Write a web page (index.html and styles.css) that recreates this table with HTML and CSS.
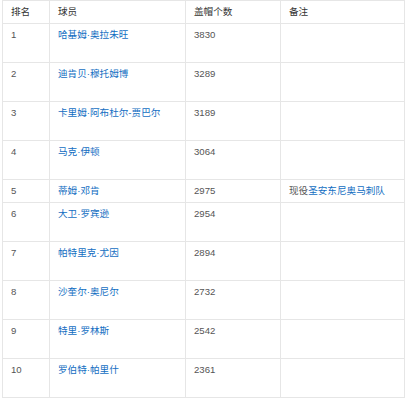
FILE: index.html
```html
<!DOCTYPE html>
<html>
<head>
<meta charset="utf-8">
<link rel="stylesheet" href="styles.css">
</head>
<body>
<table class="tbl">
  <colgroup>
    <col class="c1"><col class="c2"><col class="c3"><col class="c4">
  </colgroup>
  <tr class="head"><th>排名</th><th>球员</th><th>盖帽个数</th><th>备注</th></tr>
  <tr class="tall"><td>1</td><td><a>哈基姆·奥拉朱旺</a></td><td>3830</td><td></td></tr>
  <tr class="tall"><td>2</td><td><a>迪肯贝·穆托姆博</a></td><td>3289</td><td></td></tr>
  <tr class="tall"><td>3</td><td><a>卡里姆·阿布杜尔-贾巴尔</a></td><td>3189</td><td></td></tr>
  <tr class="tall"><td>4</td><td><a>马克·伊顿</a></td><td>3064</td><td></td></tr>
  <tr><td>5</td><td><a>蒂姆·邓肯</a></td><td>2975</td><td>现役<a>圣安东尼奥马刺队</a></td></tr>
  <tr class="tall"><td>6</td><td><a>大卫·罗宾逊</a></td><td>2954</td><td></td></tr>
  <tr class="tall"><td>7</td><td><a>帕特里克·尤因</a></td><td>2894</td><td></td></tr>
  <tr class="tall"><td>8</td><td><a>沙奎尔·奥尼尔</a></td><td>2732</td><td></td></tr>
  <tr class="tall"><td>9</td><td><a>特里·罗林斯</a></td><td>2542</td><td></td></tr>
  <tr class="tall"><td>10</td><td><a>罗伯特·帕里什</a></td><td>2361</td><td></td></tr>
</table>
</body>
</html>
```
FILE: styles.css
```css
html, body {
  margin: 0;
  padding: 0;
  background: #fff;
}
body {
  padding-left: 2px;
  font-family: "Liberation Sans", Arial, "Noto Sans CJK SC", sans-serif;
  font-size: 9.6px;
  color: #555;
}
.tbl {
  border-collapse: collapse;
  table-layout: fixed;
  width: 402px;
}
.c1 { width: 47px; }
.c2 { width: 136px; }
.c3 { width: 95px; }
.c4 { width: 124px; }
.tbl th, .tbl td {
  border: 1px solid #e6e6e6;
  padding: 3px 8px;
  line-height: 16px;
  text-align: left;
  vertical-align: top;
  font-weight: normal;
  white-space: nowrap;
}
.tbl th {
  color: #333;
}
.tall td {
  height: 32px;
}
.tbl a {
  color: #136ec2;
  text-decoration: none;
}
```
